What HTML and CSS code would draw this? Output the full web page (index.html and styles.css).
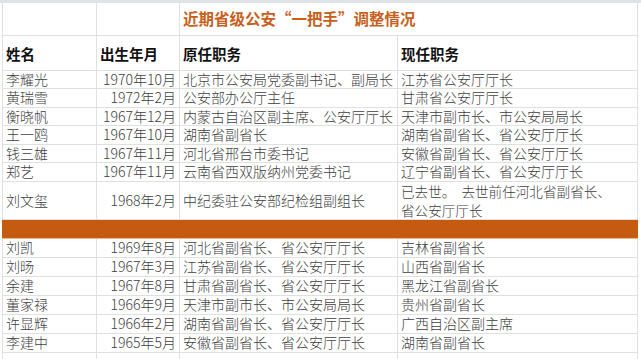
FILE: index.html
```html
<!DOCTYPE html>
<html lang="zh-CN">
<head>
<meta charset="utf-8">
<link rel="stylesheet" href="styles.css">
</head>
<body>
<div class="sheet">
<table class="grid">
<colgroup><col class="c1"><col class="c2"><col class="c3"><col class="c4"></colgroup>
<tr class="r-title"><td></td><td></td><td colspan="2" class="title">近期省级公安“一把手”调整情况</td></tr>
<tr class="r-head"><th>姓名</th><th>出生年月</th><th>原任职务</th><th>现任职务</th></tr>
<tr class="r"><td>李耀光</td><td class="num">1970年10月</td><td>北京市公安局党委副书记、副局长</td><td>江苏省公安厅厅长</td></tr>
<tr class="r"><td>黄瑞雪</td><td class="num">1972年2月</td><td>公安部办公厅主任</td><td>甘肃省公安厅厅长</td></tr>
<tr class="r"><td>衡晓帆</td><td class="num">1967年12月</td><td>内蒙古自治区副主席、公安厅厅长</td><td>天津市副市长、市公安局局长</td></tr>
<tr class="r"><td>王一鸥</td><td class="num">1967年10月</td><td>湖南省副省长</td><td>湖南省副省长、省公安厅厅长</td></tr>
<tr class="r"><td>钱三雄</td><td class="num">1967年11月</td><td>河北省邢台市委书记</td><td>安徽省副省长、省公安厅厅长</td></tr>
<tr class="r"><td>郑艺</td><td class="num">1967年11月</td><td>云南省西双版纳州党委书记</td><td>辽宁省副省长、省公安厅厅长</td></tr>
<tr class="r-tall"><td>刘文玺</td><td class="num">1968年2月</td><td>中纪委驻公安部纪检组副组长</td><td class="wrap"><div class="ln">已去世。&nbsp; 去世前任河北省副省长、</div><div class="ln">省公安厅厅长</div></td></tr>
<tr class="r-sep"><td colspan="4"></td></tr>
<tr class="r2"><td>刘凯</td><td class="num">1969年8月</td><td>河北省副省长、省公安厅厅长</td><td>吉林省副省长</td></tr>
<tr class="r2"><td>刘旸</td><td class="num">1967年3月</td><td>江苏省副省长、省公安厅厅长</td><td>山西省副省长</td></tr>
<tr class="r2"><td>余建</td><td class="num">1967年8月</td><td>甘肃省副省长、省公安厅厅长</td><td>黑龙江省副省长</td></tr>
<tr class="r2"><td>董家禄</td><td class="num">1966年9月</td><td>天津市副市长、市公安局局长</td><td>贵州省副省长</td></tr>
<tr class="r2"><td>许显辉</td><td class="num">1966年2月</td><td>湖南省副省长、省公安厅厅长</td><td>广西自治区副主席</td></tr>
<tr class="r2"><td>李建中</td><td class="num">1965年5月</td><td>安徽省副省长、省公安厅厅长</td><td>湖南省副省长</td></tr>
<tr class="r2"><td></td><td></td><td></td><td></td></tr>
</table>
</div>
</body>
</html>
```
FILE: styles.css
```css
html, body {
  margin: 0;
  padding: 0;
  background: #ffffff;
}
body {
  width: 641px;
  height: 359px;
  overflow: hidden;
  font-family: "Noto Sans CJK SC", "Noto Sans", sans-serif;
}
.sheet {
  border-top: 3px solid #dfe2e6;
  padding-left: 2px;
  width: 641px;
  box-sizing: border-box;
  background: linear-gradient(to right, #ffffff 0, #ffffff 637px, #e8e8e8 637px, #e8e8e8 638px, #ffffff 638px);
}
.grid {
  border-collapse: collapse;
  table-layout: fixed;
  width: 635px;
}
.c1 { width: 94px; }
.c2 { width: 83px; }
.c3 { width: 218px; }
.c4 { width: 240px; }
.grid td, .grid th {
  border: 1px solid #e0e0e0;
  padding: 0 0 0 3px;
  font-size: 14px;
  font-weight: 300;
  line-height: 17px;
  color: #404040;
  white-space: nowrap;
  overflow: hidden;
  text-align: left;
  vertical-align: middle;
}
.grid tr:first-child td { border-top: none; }
.grid td.num {
  text-align: right;
  padding: 0 3px 0 0;
}
.r-title { height: 32px; }
.grid td.title {
  color: #c8601c;
  font-weight: 700;
  font-size: 15.5px;
}
.r-head { height: 35px; }
.grid th {
  font-weight: 700;
  font-size: 14.5px;
  color: #111111;
  padding-top: 2px;
}
.r { height: 18.5px; }
.r-tall { height: 37px; }
.grid .r-tall td.wrap {
  line-height: 18px;
  font-size: 13.6px;
}
.ln {
  height: 18px;
  line-height: 18px;
  overflow: hidden;
}
.ln + .ln {
  margin-top: 1px;
}
.r-sep { height: 19px; }
.r-sep td {
  background: #c55a11;
  border-color: #c55a11;
  border-bottom: 1px solid #f0b88e;
}
.r2 { height: 19px; }
```
